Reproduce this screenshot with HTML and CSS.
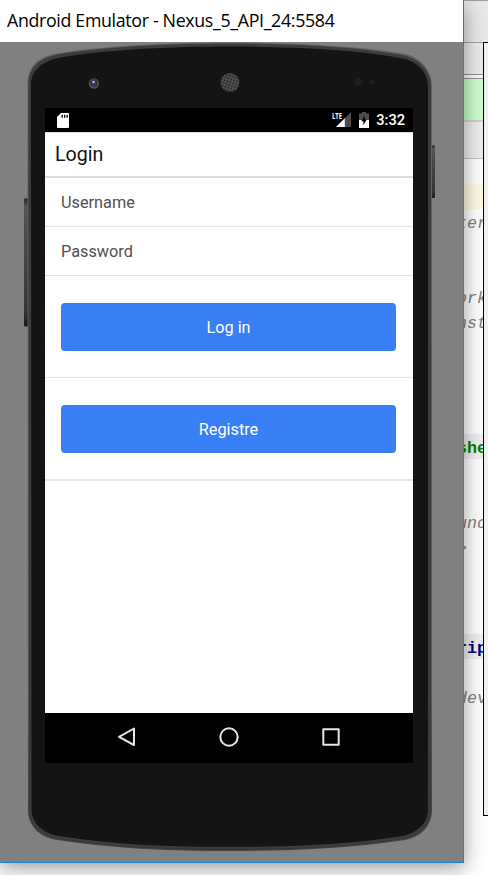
FILE: index.html
```html
<!DOCTYPE html>
<html lang="en">
<head>
<meta charset="utf-8">
<title>Android Emulator</title>
<link rel="stylesheet" href="styles.css">
</head>
<body>
<div class="desktop">
  <section class="editor">
    <div class="bar menu"></div>
    <div class="bar tools"></div>
    <div class="bar gap"></div>
    <div class="bar notice"></div>
    <div class="bar tabs"></div>
    <pre class="code"><span></span><span class="current"></span><span>ter</span><span></span><span></span><span>ork</span><span>nst</span><span></span><span></span><span></span><span></span><span class="tag green">she</span><span></span><span></span><span>unc</span><span>&gt;</span><span></span><span></span><span></span><span class="tag navy">rip</span><span></span><span>dev</span></pre>
  </section>
  <section class="window">
    <header class="titlebar">Android Emulator - Nexus_5_API_24:5584</header>
    <div class="stage">
      <svg class="shell" width="463" height="820" viewBox="0 42 463 820" aria-hidden="true">
        <defs>
          <linearGradient id="key" x1="0" y1="0" x2="0" y2="1">
            <stop offset="0" stop-color="#222"/><stop offset=".06" stop-color="#555"/><stop offset=".3" stop-color="#4a4a4a"/><stop offset=".9" stop-color="#343434"/><stop offset="1" stop-color="#181818"/>
          </linearGradient>
          <linearGradient id="rim" x1="0" y1="0" x2="0" y2="1">
            <stop offset="0" stop-color="#606264"/><stop offset=".8" stop-color="#59595b"/><stop offset="1" stop-color="#414141"/>
          </linearGradient>
          <pattern id="mesh" width="3" height="3" patternUnits="userSpaceOnUse" patternTransform="rotate(20)">
            <rect width="3" height="3" fill="#555"/><circle cx="1.5" cy="1.5" r="1" fill="#1b1b1b"/>
          </pattern>
          <path id="body" d="M27.5 84C27.5 67 37 57.500 56 53.500C104 45.500 170 42.500 230 42.500S358 45.500 406 54C421 58 432 70 432 86V810C432 826 421 837 405 840C350 848.500 290 851 230 851S108 848.500 54 839.500C38 836 28 825 28 810Z"/>
        </defs>
        <rect x="24" y="198.500" width="4.500" height="128" rx="1" fill="url(#key)"/>
        <rect x="430.500" y="145.500" width="4.500" height="52.500" rx="1" fill="url(#key)"/>
        <use href="#body" fill="url(#rim)"/>
        <path d="M28.800 84C28.800 68 39 59 57 55C104 47 170 44 230 44S358 47 405 56C420 60 430.500 71 430.500 86V810C430.500 825 420 835 404 838.500C350 847 290 849.500 230 849.500S108 847 55 838C39 834 29.300 824 29.300 810Z" fill="#3c3d3f" stroke="#303133" stroke-width=".6"/>
        <path d="M31 85C31 71 41 62 58 58C104 49.500 170 46.500 230 46.500S358 49.500 403 58.500C418 62 428 72 428 87V810C428 823 418 832 403 836C350 844.500 290 847 230 847S108 844.500 56 835.500C41 832 31.500 822 31.500 809Z" fill="#141414"/>
        <circle cx="94" cy="83.500" r="5.200" fill="#505050"/><circle cx="94" cy="83" r="3.800" fill="#33333a"/><circle cx="94" cy="83.500" r="2.200" fill="#303090"/><circle cx="93.500" cy="82" r="1.200" fill="#c4c4dc"/>
        <circle cx="230" cy="82.500" r="9.500" fill="url(#mesh)"/>
        <circle cx="358.500" cy="82" r="4" fill="#211d1e"/><circle cx="371.500" cy="82" r="2.500" fill="#211d1e"/>
      </svg>
      <main class="screen">
        <div class="status">
          <svg class="sd" width="12" height="15" viewBox="0 0 12 15"><path fill="#fff" d="M4 0H11Q12 0 12 1V14Q12 15 11 15H1Q0 15 0 14V4Z"/><path stroke="#000" stroke-width="1.300" d="M5.200 1.800v3M7.700 1.800v3M10.200 1.800v3"/></svg>
          <span class="signal"><b class="lte">LTE</b><svg width="19" height="16" viewBox="0 0 19 16"><path fill="#4d4d4d" d="M19 0V15H4Z"/><path fill="#fff" d="M12.800 6.200V15H4Z"/></svg></span>
          <svg class="battery" width="10" height="16" viewBox="0 0 10 16"><path fill="#4d4d4d" d="M3 0h4v1.500h3V8H0V1.500h3Z"/><path fill="#fff" d="M0 8h10v8H0Z"/><path fill="#000" d="M5.800 3.500L2.300 9.300h2.100v4L7.800 7.500H5.800Z"/></svg>
          <span class="clock">3:32</span>
        </div>
        <h1 class="heading">Login</h1>
        <div class="field">Username</div>
        <div class="field">Password</div>
        <div class="action"><div class="button">Log in</div></div>
        <div class="action second"><div class="button">Registre</div></div>
        <div class="blank"></div>
        <nav class="nav">
          <svg width="22" height="22" viewBox="0 0 22 22"><path d="M18 2.500V19L3 10.800Z"/></svg>
          <svg width="22" height="22" viewBox="0 0 22 22"><circle cx="11" cy="11" r="8.700"/></svg>
          <svg width="22" height="22" viewBox="0 0 22 22"><path d="M3.300 3.300H18.700V18.700H3.300Z"/></svg>
        </nav>
      </main>
    </div>
  </section>
  <aside class="dialog"></aside>
</div>
</body>
</html>
```
FILE: styles.css
```css
* { box-sizing: border-box; }
body { margin: 0; }
.desktop { position: relative; width: 488px; height: 875px; overflow: hidden; background: #fff; }

.editor { position: absolute; top: 0; left: 457px; width: 31px; }
.menu { height: 42px; background: #e9e9e9; border-top: 1px solid #a0a0a0; }
.tools { height: 33px; background: #ebebeb; border-top: 1px solid #a0a0a0; border-bottom: 1px solid #919191; }
.gap { height: 4px; background: #fafafa; border-bottom: 1px solid #919191; }
.notice { height: 41px; background: #ccffcc; }
.tabs { height: 39px; background: #eee; border-top: 2px solid #d2d2d2; border-bottom: 1px solid #c4c4c4; }
.code { margin: 0; font: italic 16.67px/29px "Liberation Mono", monospace; color: #808080; }
.code span { display: block; height: 25px; }
.code .current { background: #fffae3; }
.code .tag { background: #efefef; font-style: normal; font-weight: bold; }
.code .green { color: #008000; }
.code .navy { color: #000080; }

.window { position: absolute; top: 0; left: 0; width: 464px; height: 863px; border: solid #1883d7; border-width: 0 1px 1px 0; background: #808080; box-shadow: 0 5px 20px rgba(0, 0, 0, .4); }
.titlebar { height: 42px; padding: 0 7px; background: #fff; color: #000; font: 17.8px/40px "Open Sans", "Noto Sans", sans-serif; letter-spacing: -.33px; white-space: nowrap; }
.stage { display: grid; height: 820px; }
.shell { grid-area: 1 / 1; }
.screen { grid-area: 1 / 1; z-index: 1; display: flex; flex-direction: column; width: 368px; height: 655px; margin: 66px 0 0 45px; background: #fff; font-family: Roboto, sans-serif; }

.status { display: flex; align-items: center; height: 24px; padding: 0 8px 0 12px; background: #000; color: #fff; }
.signal { display: flex; margin-left: auto; }
.signal svg { margin-left: -15px; }
.lte { width: 15px; font: bold 9.5px/8px "Open Sans", sans-serif; transform: scaleX(.62); transform-origin: left; }
.battery { margin-left: 8px; }
.clock { margin-left: 7px; font-size: 14.6px; font-weight: 500; line-height: 25px; padding-top: 1px; }

.heading { height: 46px; margin: 0; padding: 0 10px; border-top: 1px solid #ddd; border-bottom: 2px solid #dcdcdc; color: #111; font-size: 19.6px; font-weight: 400; line-height: 43px; }
.field { height: 49px; padding: 0 16px; border-bottom: 1px solid #e2e2e2; color: #505050; font-size: 16.3px; line-height: 50px; }
.action { height: 102px; padding: 27px 17px 0 16px; border-bottom: 1px solid #e5e5e5; }
.button { height: 48px; border-radius: 4px; background: #387ef5; color: #fff; font-size: 16.3px; line-height: 49px; text-align: center; }
.second { border-bottom: 2px solid #e5e5e5; height: 103px; }
.blank { flex: 1; }
.nav { display: flex; justify-content: center; gap: 80px; align-items: center; height: 50px; padding-bottom: 2px; background: #000; }
.nav svg { fill: none; stroke: #e6e6e6; stroke-width: 2; stroke-linejoin: round; }

.dialog { position: absolute; top: 42px; left: 483px; width: 20px; height: 774px; border: 1px solid #000; background: #f0f0f0; }
```
